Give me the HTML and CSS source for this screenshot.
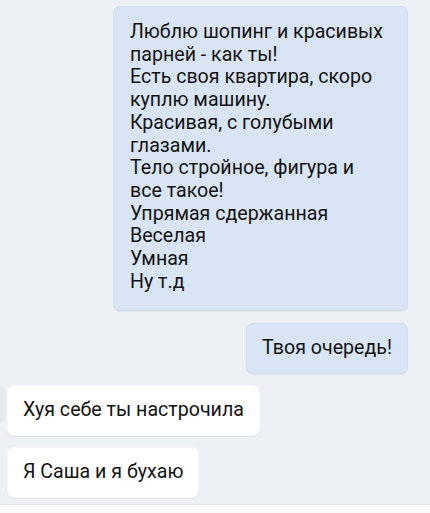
FILE: index.html
```html
<!DOCTYPE html>
<html lang="ru">
<head>
  <meta charset="UTF-8">
  <meta name="viewport" content="width=device-width, initial-scale=1.0">
  <title>Диалог</title>
  <link rel="stylesheet" href="styles.css">
</head>
<body>
  <div class="chat">
    <!-- outgoing -->
    <div class="msg out big">
      Люблю шопинг и красивых парней - как ты!<br>
      Есть своя квартира, скоро куплю машину.<br>
      Красивая, с голубыми глазами.<br>
      Тело стройное, фигура и все такое!<br>
      Упрямая сдержанная<br>
      Веселая<br>
      Умная<br>
      Ну т.д
    </div>
    <div class="msg out">Твоя очередь!</div>

    <!-- incoming -->
    <div class="msg in first">Хуя себе ты настрочила</div>
    <div class="msg in">Я Саша и я бухаю</div>
  </div>
  <div class="bottom"></div>
</body>
</html>
```

FILE: styles.css
```css
/* CSS */
body {
  margin: 0;
  padding: 0;
  background: #edf0f4;
  font-family: Roboto, "Noto Sans", sans-serif;
  color: #131313;
  height: 513px;
  overflow: hidden;
  position: relative;
}

.chat {
  display: flex;
  flex-direction: column;
  padding: 6px 22px 0 7px;
}

.msg {
  font-size: 19.6px;
  line-height: 22.7px;
  padding: 13px 15px;
  border-radius: 7px;
  box-shadow: 0 1px 1px rgba(0, 0, 0, 0.06);
  border: 1px solid rgba(0, 0, 0, 0.03);
}

.out {
  align-self: flex-end;
  background: #d9e5f4;
  margin-bottom: 11px;
}

.big {
  width: 256px;
  padding: 14px 21px 17px 16px;
  margin-bottom: 12px;
}

.in {
  align-self: flex-start;
  background: #ffffff;
  margin-bottom: 11px;
}

.first {
  position: relative;
}

.first::before {
  content: "";
  position: absolute;
  left: -12px;
  top: -2px;
  width: 10px;
  height: 40px;
  border-radius: 0 10px 10px 0;
  background: #e6e9ee;
}

.bottom {
  position: absolute;
  left: 0;
  right: 0;
  bottom: 0;
  height: 8px;
  background: #f9fafb;
  border-top: 1px solid #e3e6ea;
}
```
